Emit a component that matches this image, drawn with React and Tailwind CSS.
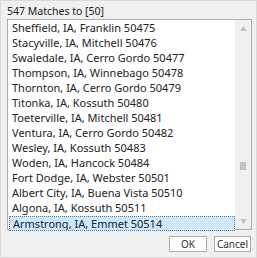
import React from 'react';

const rows = [
  'Sheffield, IA, Franklin 50475',
  'Stacyville, IA, Mitchell 50476',
  'Swaledale, IA, Cerro Gordo 50477',
  'Thompson, IA, Winnebago 50478',
  'Thornton, IA, Cerro Gordo 50479',
  'Titonka, IA, Kossuth 50480',
  'Toeterville, IA, Mitchell 50481',
  'Ventura, IA, Cerro Gordo 50482',
  'Wesley, IA, Kossuth 50483',
  'Woden, IA, Hancock 50484',
  'Fort Dodge, IA, Webster 50501',
  'Albert City, IA, Buena Vista 50510',
  'Algona, IA, Kossuth 50511',
  'Armstrong, IA, Emmet 50514',
];

export default function App() {
  const selected = rows.length - 1;

  return (
    <div
      className="w-[257px] h-[258px] bg-[#f0f0f0] border border-[#dadada] text-[#222] flex flex-col"
      style={{ fontFamily: '"Noto Sans", "Open Sans", sans-serif' }}
    >
      <div className="pl-[6px] pt-[3px] h-[18px] text-[10.5px] leading-[14px]">547 Matches to [50]</div>

      <div className="ml-[6px] w-[245px] h-[211px] border border-[#abadb3] bg-white flex">
        <ul className="flex-1 pt-[1px] pl-[1px]">
          {rows.map((r, i) => (
            <li
              key={r}
              className={
                'h-[15px] pl-[3px] text-[11px] leading-[14px] whitespace-nowrap overflow-hidden ' +
                (i === selected ? 'bg-[#cce8ff] border border-dotted border-[#5a7f9c] pl-[2px] leading-[13px]' : '')
              }
            >
              {r}
            </li>
          ))}
        </ul>
        <div className="w-[16px] bg-[#f0f0f0] flex flex-col items-center">
          <div className="h-[16px] flex items-center justify-center">
            <svg width="7" height="5" viewBox="0 0 7 5"><path d="M3.5 0 L7 5 L0 5 Z" fill="#c2c2c2" /></svg>
          </div>
          <div className="flex-1 relative w-full">
            <div className="absolute left-[5px] top-[126px] w-[6px] h-[8px] bg-[#c2c2c2]" />
          </div>
          <div className="h-[16px] flex items-center justify-center">
            <svg width="7" height="5" viewBox="0 0 7 5"><path d="M0 0 L7 0 L3.5 5 Z" fill="#c2c2c2" /></svg>
          </div>
        </div>
      </div>

      <div className="flex justify-end gap-[7px] pr-[5px] pt-[6px]">
        <button className="w-[38px] h-[16px] border border-[#adadad] bg-[#fdfdfd] text-[10px] leading-[14px] text-[#333]">
          OK
        </button>
        <button className="w-[37px] h-[16px] border border-[#adadad] bg-[#fdfdfd] text-[10px] leading-[14px] text-[#333]">
          Cancel
        </button>
      </div>
    </div>
  );
}
